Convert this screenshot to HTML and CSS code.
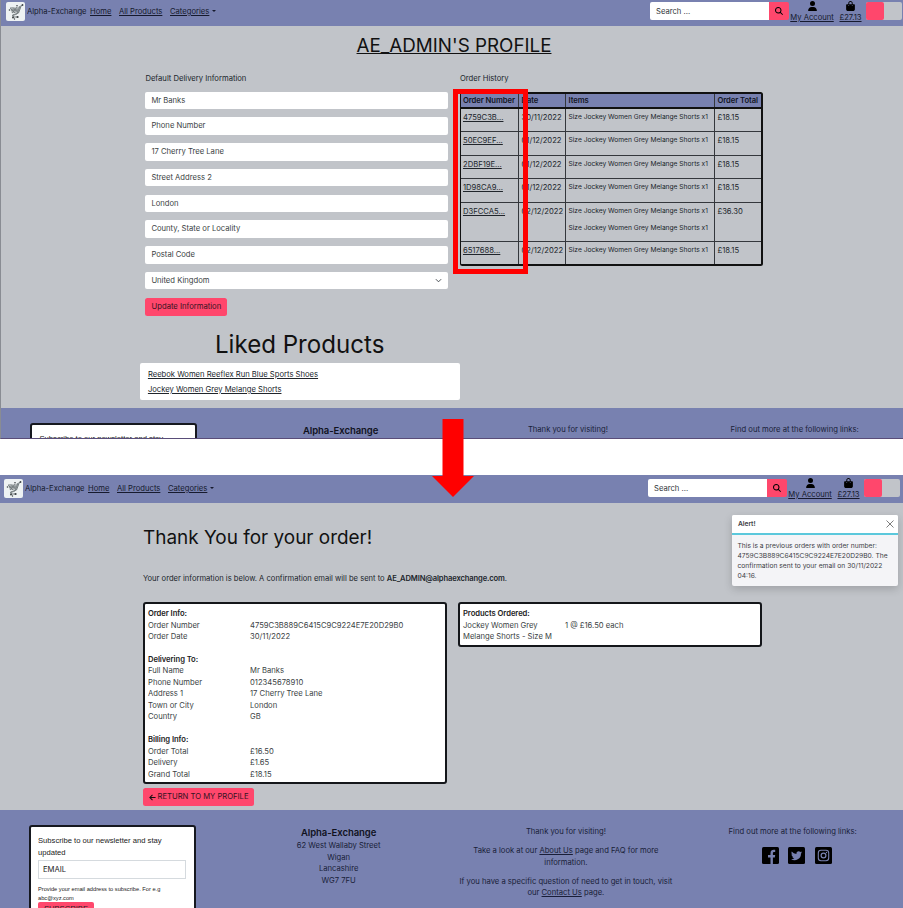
FILE: index.html
```html
<!DOCTYPE html>
<html lang="en">
<head>
<meta charset="utf-8">
<title>Alpha-Exchange</title>
<link rel="stylesheet" href="styles.css">
</head>
<body>
<svg class="defs" width="0" height="0">
  <symbol id="logo" viewBox="0 0 19 19">
    <path d="M4 5l7 .5 4-2-2.500 7-6.500.8z" fill="#a9afb1"/>
    <path d="M4 6l5 5M7 5.500l5 5M11 5l-5 6M14 4l-3 8-5 2M5 8h7" stroke="#687174" stroke-width=".7" fill="none"/>
    <path d="M15.500 3l-3 8-6 2 1 2h5" stroke="#747d7f" stroke-width="1" fill="none"/>
    <g fill="#3b4144"><circle cx="11" cy="3.700" r=".8"/><circle cx="16.500" cy="3" r=".9"/><circle cx="3.500" cy="8" r=".8"/><circle cx="7" cy="15.500" r="1"/><circle cx="11.500" cy="15" r="1"/><circle cx="8.500" cy="17" r=".7"/></g>
  </symbol>
  <symbol id="search" viewBox="0 0 512 512"><path d="M416 208c0 45.900-14.900 88.300-40 122.700L502.600 457.400c12.500 12.500 12.500 32.800 0 45.300s-32.800 12.500-45.300 0L330.700 376c-34.400 25.200-76.800 40-122.700 40C93.100 416 0 322.900 0 208S93.100 0 208 0S416 93.100 416 208zM208 352a144 144 0 1 0 0-288 144 144 0 1 0 0 288z"/></symbol>
  <symbol id="user" viewBox="0 0 448 512"><path d="M224 256A128 128 0 1 0 224 0a128 128 0 1 0 0 256zm-45.700 48C79.800 304 0 383.800 0 482.300C0 498.700 13.300 512 29.700 512H418.300c16.400 0 29.700-13.300 29.700-29.700C448 383.800 368.200 304 269.700 304H178.300z"/></symbol>
  <symbol id="bag" viewBox="0 0 448 512"><path d="M160 112c0-35.300 28.700-64 64-64s64 28.700 64 64v48H160V112zm-48 48H48c-26.500 0-48 21.500-48 48V416c0 53 43 96 96 96H352c53 0 96-43 96-96V208c0-26.500-21.500-48-48-48H336V112C336 50.100 285.900 0 224 0S112 50.100 112 112v48zm24 48a24 24 0 1 1 0 48 24 24 0 1 1 0-48zm152 24a24 24 0 1 1 48 0 24 24 0 1 1-48 0z"/></symbol>
</svg>

<section class="screen screen-profile">
  <header class="nav">
    <svg class="logo"><use href="#logo"/></svg>
    <span class="brand">Alpha-Exchange</span>
    <a class="home">Home</a><a class="all">All Products</a><a class="cats">Categories</a><i class="caret"></i>
    <div class="tools">
      <span class="search-input">Search ...</span><span class="search-btn"><svg><use href="#search"/></svg></span>
      <a class="account"><svg><use href="#user"/></svg><span>My Account</span></a>
      <a class="bag"><svg><use href="#bag"/></svg><span>£27.13</span></a>
      <span class="toggle"><i></i></span>
    </div>
  </header>
  <main class="profile">
    <h1>AE_ADMIN'S PROFILE</h1>
    <div class="columns">
      <div class="delivery">
        <p class="label">Default Delivery Information</p>
        <div class="field">Mr Banks</div>
        <div class="field">Phone Number</div>
        <div class="field">17 Cherry Tree Lane</div>
        <div class="field">Street Address 2</div>
        <div class="field">London</div>
        <div class="field">County, State or Locality</div>
        <div class="field">Postal Code</div>
        <div class="field select">United Kingdom<svg viewBox="0 0 16 16"><path d="m2 5 6 6 6-6" fill="none" stroke="#343a40" stroke-width="2"/></svg></div>
        <span class="btn">Update Information</span>
        <h2>Liked Products</h2>
        <div class="liked"><a>Reebok Women Reeflex Run Blue Sports Shoes</a><a>Jockey Women Grey Melange Shorts</a></div>
      </div>
      <div class="history">
        <p class="label">Order History</p>
        <div class="orders">
          <div class="row head"><b>Order Number</b><b>Date</b><b>Items</b><b>Order Total</b></div>
          <div class="row"><a>4759C3B...</a><span>30/11/2022</span><small>Size Jockey Women Grey Melange Shorts x1</small><span>£18.15</span></div>
          <div class="row"><a>50EC9EF...</a><span>01/12/2022</span><small>Size Jockey Women Grey Melange Shorts x1</small><span>£18.15</span></div>
          <div class="row"><a>2DBF19E...</a><span>01/12/2022</span><small>Size Jockey Women Grey Melange Shorts x1</small><span>£18.15</span></div>
          <div class="row"><a>1D98CA9...</a><span>01/12/2022</span><small>Size Jockey Women Grey Melange Shorts x1</small><span>£18.15</span></div>
          <div class="row double"><a>D3FCCA5...</a><span>02/12/2022</span><small>Size Jockey Women Grey Melange Shorts x1<br>Size Jockey Women Grey Melange Shorts x1</small><span>£36.30</span></div>
          <div class="row"><a>6517688...</a><span>02/12/2022</span><small>Size Jockey Women Grey Melange Shorts x1</small><span>£18.15</span></div>
          <div class="highlight"></div>
        </div>
      </div>
    </div>
  </main>
  <footer class="footer">
    <div class="newsletter"><p>Subscribe to our newsletter and stay</p></div>
    <div class="address"><h3>Alpha-Exchange</h3></div>
    <div class="about"><p>Thank you for visiting!</p></div>
    <div class="links"><p>Find out more at the following links:</p></div>
  </footer>
</section>

<svg class="arrow" viewBox="0 0 42 78"><path d="M10.500 0h21v57H42L21 78 0 57h10.500z" fill="#f00"/></svg>

<section class="screen screen-order">
  <header class="nav">
    <svg class="logo"><use href="#logo"/></svg>
    <span class="brand">Alpha-Exchange</span>
    <a class="home">Home</a><a class="all">All Products</a><a class="cats">Categories</a><i class="caret"></i>
    <div class="tools">
      <span class="search-input">Search ...</span><span class="search-btn"><svg><use href="#search"/></svg></span>
      <a class="account"><svg><use href="#user"/></svg><span>My Account</span></a>
      <a class="bag"><svg><use href="#bag"/></svg><span>£27.13</span></a>
      <span class="toggle"><i></i></span>
    </div>
  </header>
  <aside class="toast">
    <div class="toast-head"><strong>Alert!</strong><svg viewBox="0 0 16 16"><path d="M1 1l14 14M15 1L1 15" stroke="#666" stroke-width="1.700"/></svg></div>
    <p>This is a previous orders with order number:<br>4759C3B889C6415C9C9224E7E20D29B0. The<br>confirmation sent to your email on 30/11/2022<br>04:16.</p>
  </aside>
  <main class="order">
    <h1>Thank You for your order!</h1>
    <p class="sent">Your order information is below. A confirmation email will be sent to <b>AE_ADMIN@alphaexchange.com</b>.</p>
    <div class="cards">
      <dl class="card">
        <dt class="title">Order Info:</dt>
        <dt>Order Number</dt><dd>4759C3B889C6415C9C9224E7E20D29B0</dd>
        <dt>Order Date</dt><dd>30/11/2022</dd>
        <dt class="title gap">Delivering To:</dt>
        <dt>Full Name</dt><dd>Mr Banks</dd>
        <dt>Phone Number</dt><dd>012345678910</dd>
        <dt>Address 1</dt><dd>17 Cherry Tree Lane</dd>
        <dt>Town or City</dt><dd>London</dd>
        <dt>Country</dt><dd>GB</dd>
        <dt class="title gap">Billing Info:</dt>
        <dt>Order Total</dt><dd>£16.50</dd>
        <dt>Delivery</dt><dd>£1.65</dd>
        <dt>Grand Total</dt><dd>£18.15</dd>
      </dl>
      <dl class="card products">
        <dt class="title">Products Ordered:</dt>
        <dt>Jockey Women Grey<br>Melange Shorts - Size M</dt><dd>1 @ £16.50 each</dd>
      </dl>
    </div>
    <span class="btn back"><svg viewBox="0 0 16 16"><path d="M15 8H2M8 2L2 8l6 6" fill="none" stroke="#111" stroke-width="2.400"/></svg>RETURN TO MY PROFILE</span>
  </main>
  <footer class="footer">
    <div class="newsletter">
      <p>Subscribe to our newsletter and stay<br>updated</p>
      <div class="email">EMAIL</div>
      <p class="hint">Provide your email address to subscribe. For e.g<br>abc@xyz.com</p>
      <span class="subscribe">SUBSCRIBE</span>
    </div>
    <div class="address"><h3>Alpha-Exchange</h3><p>62 West Wallaby Street<br>Wigan<br>Lancashire<br>WG7 7FU</p></div>
    <div class="about">
      <p>Thank you for visiting!</p>
      <p>Take a look at our <a>About Us</a> page and FAQ for more<br>information.</p>
      <p>If you have a specific question of need to get in touch, visit<br>our <a>Contact Us</a> page.</p>
    </div>
    <div class="links">
      <p>Find out more at the following links:</p>
      <div class="social">
        <svg viewBox="0 0 17 17"><rect width="17" height="17" rx="1.500"/><path d="M8.500 17v-6.500H6V8h2.500V6.200C8.500 3.800 9.900 2.800 11.700 2.800c.8 0 1.500.1 1.500.1V5h-1c-1 0-1.300.6-1.300 1.300V8h2.300l-.4 2.500h-1.900V17z" fill="#7881b0"/></svg>
        <svg viewBox="0 0 17 17"><rect width="17" height="17" rx="1.500"/><path d="M14 5.200c-.4.200-.8.300-1.300.4.500-.3.800-.7 1-1.200-.5.200-.9.400-1.400.5a2.300 2.300 0 0 0-3.900 2A6.400 6.400 0 0 1 3.700 4.600a2.300 2.300 0 0 0 .7 3c-.4 0-.7-.1-1-.3 0 1.100.8 2.100 1.800 2.300-.3.100-.7.100-1 0 .3.900 1.100 1.600 2.100 1.600A4.600 4.600 0 0 1 3 12.200a6.500 6.500 0 0 0 10-5.800c.4-.3.800-.7 1-1.200z" fill="#7881b0"/></svg>
        <svg viewBox="0 0 17 17"><rect width="17" height="17" rx="1.500"/><g fill="none" stroke="#7881b0"><rect x="3.300" y="3.300" width="10.400" height="10.400" rx="2.700" stroke-width="1.100"/><circle cx="8.500" cy="8.500" r="2.400" stroke-width="1.200"/></g><circle cx="11.500" cy="5.500" r=".7" fill="#7881b0"/></svg>
      </div>
    </div>
  </footer>
</section>
</body>
</html>
```
FILE: styles.css
```css
* { box-sizing: border-box; }
body { position: relative; margin: 0; width: 903px; height: 908px; overflow: hidden; background: #fff; font: 7.65px/11.5px Inter, "Liberation Sans", sans-serif; color: #20252b; }
h1, h2, h3, p, dl, dd { margin: 0; }
a { text-decoration: underline; }
.defs { display: block; height: 0; }
.screen { position: relative; overflow: hidden; background: #c1c4c9; }
.screen-profile { height: 439px; border-left: 1px solid #898c93; border-bottom: 1px solid #594d79; margin-bottom: 36px; }
.screen-order { height: 433px; }

.nav { display: flex; height: 26px; padding: 2px 1px 0 5px; background: #7881b0; line-height: 20px; color: #161a2e; }
.screen-order .nav { height: 28px; padding: 4px 3px 0 4px; }
.nav > * { flex: none; }
.logo { width: 19px; height: 19px; background: #eef2f3; border-radius: 2px; }
.brand { width: 65px; padding-left: 2px; }
.home { width: 29px; }
.all { width: 51px; }
.cats { width: 42px; }
.caret { width: 0; height: 0; margin-top: 8px; border: 2px solid transparent; border-top: 2.500px solid #161a2e; border-bottom: 0; }
.tools { display: flex; margin-left: auto; }
.search-input { width: 119px; height: 18px; padding-left: 6px; background: #fff; border-radius: 2px 0 0 2px; color: #33373c; }
.search-btn { display: flex; align-items: center; justify-content: center; width: 20px; height: 18px; background: #ff476c; border-radius: 0 2px 2px 0; }
.search-btn svg { width: 8px; height: 8px; }
.account, .bag { display: flex; flex-direction: column; align-items: center; margin-top: -2px; line-height: 11px; }
.account { width: 46px; }
.bag { width: 31px; }
.account svg, .bag svg { width: 9px; height: 10px; margin: 1px 0; flex: none; }
.toggle { width: 36px; height: 18px; background: #c1c4c9; border-radius: 2px; }
.toggle i { display: block; width: 18px; height: 18px; background: #ff476c; border-radius: 2px; }

.profile { height: 382px; }
.profile h1 { height: 46px; padding: 7px 0 0 4px; font-size: 18.800px; font-weight: 400; line-height: 26px; text-align: center; text-decoration: underline; text-decoration-thickness: 1px; color: #111; }
.columns { display: flex; padding-left: 144.400px; }
.delivery { width: 314.600px; }
.history { width: 304px; }
.label { height: 19.500px; line-height: 13px; }
.field { display: flex; align-items: center; width: 303px; height: 17.500px; margin-bottom: 8.250px; padding: 0 6px; background: #fff; border-radius: 2px; color: #3b3f44; }
.select { justify-content: space-between; }
.select svg { width: 7px; height: 7px; }
.btn { display: inline-flex; align-items: center; justify-content: center; width: 82px; height: 18px; background: #ff476c; border-radius: 2.500px; color: #351322; }
h2 { margin-top: 12px; padding-right: 6px; font-size: 24.100px; line-height: 34px; font-weight: 400; text-align: center; color: #111; }
.liked { display: flex; flex-direction: column; gap: 4px; width: 320px; height: 37px; margin: 1px 0 0 -5px; padding: 6px 7.500px; background: #fff; border-radius: 2px; }

.orders { position: relative; width: 303px; border: 2px solid #111; border-left-width: 1px; border-radius: 2.500px; }
.row { display: grid; grid-template-columns: 58.500px 47px 149px 1fr; height: 23.400px; border-bottom: 1px solid #34373c; }
.row > * { padding: 3px 0 0 2px; border-right: 1px solid #34373c; }
.row > :last-child { border-right: 0; }
.row.head { height: 15.500px; background: #7881b0; border-bottom: 2px solid #111; color: #111423; }
.row.head b { font-weight: 600; padding-top: 1px; letter-spacing: -.06px; }
.row.double { height: 39.300px; }
.row.double small { line-height: 17px; padding-top: 0; }
.row:nth-child(7) { height: 22.500px; border-bottom: 0; }
.row small { font-size: 6.650px; }
.highlight { position: absolute; left: -8px; top: -4.500px; width: 75px; height: 185px; border: 5px solid #f00; }

.footer { display: grid; grid-template-columns: repeat(4, 1fr); background: #7881b0; height: 98px; text-align: center; color: #191e38; }
.screen-profile .footer { height: 31px; padding-left: 1px; margin-right: -2px; }
.footer > div { padding-top: 16px; }
.footer .newsletter { width: 167px; height: 120px; margin: 15px 0 0 29px; padding: 8px 7.500px; border: 2px solid #16181f; border-radius: 3px; background: #fff; text-align: left; color: #222; font-family: "Liberation Sans", sans-serif; }
.screen-order .newsletter { margin-left: 28.500px; }
.screen-profile .newsletter { margin-left: 28px; }
.email { height: 19px; margin-top: 2px; padding: 0 4px; border: 1px solid #d5dade; line-height: 17px; font-family: Inter, sans-serif; }
.hint { margin-top: 6px; font-size: 5.700px; line-height: 8.700px; }
.subscribe { display: block; width: 56px; height: 18px; background: #ff476c; border-radius: 2px; line-height: 14px; text-align: center; }
.footer h3 { margin-bottom: 1px; font-size: 9.500px; line-height: 13px; font-weight: 600; letter-spacing: -.06px; color: #10121e; }
.about { padding-left: 3px; }
.links { padding-left: 5px; }
.about p { margin-bottom: 7.650px; }
.social { display: flex; justify-content: center; gap: 9.500px; margin: 9px 0 0 8px; }
.social svg { width: 17px; height: 17px; }
.arrow { position: absolute; z-index: 5; left: 432px; top: 419px; width: 42px; height: 78px; }

.toast { position: absolute; right: 5px; top: 40px; width: 166px; height: 71px; background: #f4f4f7; border-radius: 2px; box-shadow: 0 3px 8px rgba(0, 0, 0, .18); overflow: hidden; font-size: 6.700px; line-height: 10px; color: #3c4045; }
.toast-head { display: flex; align-items: center; justify-content: space-between; height: 20px; padding: 0 4px 0 6px; background: #fff; border-bottom: 2px solid #5bc8dc; }
.toast-head strong { font-weight: 600; letter-spacing: -.06px; }
.toast-head svg { width: 8px; height: 8px; }
.toast p { padding: 6px 5.500px; }
.order { height: 307px; padding-left: 143px; }
.order h1 { height: 66px; padding-top: 20.500px; font-size: 18.950px; line-height: 28px; font-weight: 400; color: #111; }
.sent { height: 33px; padding-top: 4px; font-size: 7.600px; }
.sent b { font-weight: 600; letter-spacing: -.13px; }
.cards { display: flex; align-items: flex-start; gap: 11px; }
.card { display: grid; grid-template-columns: 102px 1fr; align-content: start; width: 304px; height: 182px; padding: 4px 3px; background: #fff; border: 2px solid #14161a; border-radius: 3px; color: #3b3f44; line-height: 11.500px; }
.card .title { grid-column: 1 / -1; font-weight: 600; letter-spacing: -.06px; color: #222; }
.card .gap { margin-top: 11.450px; }
.card.products { height: 45px; }
.back { width: 111px; margin-top: 4px; gap: 2px; }
.back svg { width: 7px; height: 7px; }
```
